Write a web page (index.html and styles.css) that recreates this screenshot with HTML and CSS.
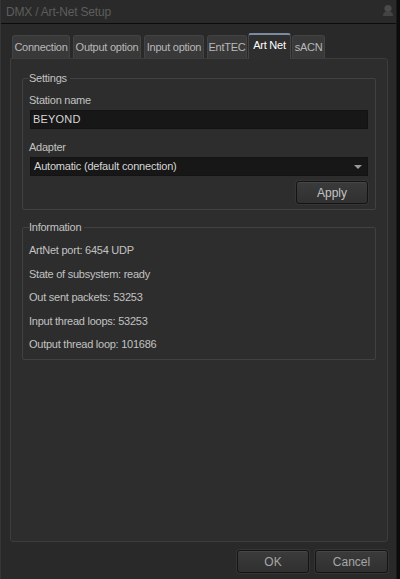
FILE: index.html
```html
<!DOCTYPE html>
<html>
<head>
<meta charset="utf-8">
<title>DMX / Art-Net Setup</title>
<link rel="stylesheet" href="styles.css">
</head>
<body>
<div class="window">
    <div class="titlebar">
        <span class="title">DMX / Art-Net Setup</span>
        <svg class="pin" width="12" height="13" viewBox="0 0 12 13">
            <circle cx="6" cy="4.5" r="3.6" fill="#4a4a4a"/>
            <path d="M1 12 C1 8.5 3 7.5 6 7.5 C9 7.5 11 8.5 11 12 Z" fill="#444"/>
        </svg>
    </div>
    <div class="content">
        <div class="tabs">
            <div class="tab t-conn">Connection</div>
            <div class="tab t-out">Output option</div>
            <div class="tab t-in">Input option</div>
            <div class="tab t-ent">EntTEC</div>
            <div class="tab t-art active">Art Net</div>
            <div class="tab t-sacn">sACN</div>
        </div>
        <div class="pane">
            <fieldset class="group">
                <legend>Settings</legend>
                <div class="label">Station name</div>
                <div class="input">BEYOND</div>
                <div class="label gap">Adapter</div>
                <div class="select">Automatic (default connection)<span class="arrow"></span></div>
                <div class="apply-row"><button class="btn apply">Apply</button></div>
            </fieldset>
            <fieldset class="group info">
                <legend>Information</legend>
                <div class="row">ArtNet port: 6454 UDP</div>
                <div class="row">State of subsystem: ready</div>
                <div class="row">Out sent packets: 53253</div>
                <div class="row">Input thread loops: 53253</div>
                <div class="row">Output thread loop: 101686</div>
            </fieldset>
        </div>
        <div class="actions">
            <button class="btn ok">OK</button>
            <button class="btn cancel">Cancel</button>
        </div>
    </div>
</div>
</body>
</html>
```

FILE: styles.css
```css
body {margin:0; background:#0c0c0c; font-family:"Liberation Sans", Arial, sans-serif;}
.window {
    width:397px; height:579px;
    box-sizing:border-box;
    background:#292929;
    border-left:1px solid #353535;
    border-right:1px solid #1a1a1a;
}
.titlebar {
    height:23px;
    border-bottom:1px solid #0c0c0c;
    background:#2a2a2a;
    display:flex; align-items:center; justify-content:space-between;
    padding:0 2px 0 5px;
}
.title {font-size:12px; color:#5d5d5d; letter-spacing:-0.2px;}
.pin {margin-top:-2px;}

.content {padding:0 8px 0 9px;}

/* tabs */
.tabs {display:flex; align-items:flex-end; gap:3px; padding:9px 0 0 2px;}
.tab {
    height:23px; box-sizing:border-box;
    background:#393939;
    border:1px solid #434343; border-bottom:none;
    border-radius:3px 3px 0 0;
    color:#b8b8b8; font-size:11px; letter-spacing:-0.25px;
    line-height:23px; text-align:center;
}
.t-conn {width:58px;}
.t-out {width:68px;}
.t-in {width:60px;}
.t-ent {width:40px;}
.t-art {width:43px;}
.t-sacn {width:33px;}
.tab.active {
    height:26px;
    margin:0 -2px -1px;
    background:#2e2e2e;
    border-color:#454545;
    border-top:2px solid #7a8ba0;
    color:#fff;
    line-height:21px;
    position:relative; z-index:1;
}

.pane {
    height:484px; box-sizing:border-box;
    background:#2d2d2d;
    border:1px solid #3d3d3d;
    border-radius:0 3px 3px 3px;
    padding:0 11px 0 11px;
}

/* group boxes */
.group {
    margin:12px 0 0; min-width:0;
    border:1px solid #414141; border-radius:2px;
    padding:8px 7px 5px;
}
.group legend {
    padding:0 3px 0 0; margin-left:-1px;
    font-size:11px; line-height:14px; color:#c2c2c2; letter-spacing:-0.25px;
}
.label {font-size:11px; line-height:14px; color:#c2c2c2; letter-spacing:-0.25px; margin-left:-1px;}
.label.gap {margin-top:11px;}
.input, .select {
    margin-top:3px;
    height:19px; box-sizing:border-box;
    background:#171717;
    border:1px solid #131313;
    color:#d6d6d6; font-size:11px; line-height:17px; letter-spacing:-0.2px;
}
.input {padding-left:2px; letter-spacing:0.2px;}
.select {padding-left:3px; display:flex; justify-content:space-between; align-items:center;}
.arrow {
    width:0; height:0; margin-right:5px;
    border-left:4px solid transparent; border-right:4px solid transparent;
    border-top:4px solid #9a9a9a;
}
.apply-row {display:flex; justify-content:flex-end; margin-top:5px;}

.info {margin-top:10px; padding:5px 7px 2px;}
.row {font-size:11px; line-height:23.5px; color:#c2c2c2; letter-spacing:-0.25px; margin-left:-1px;}

/* buttons */
.btn {
    height:23px; box-sizing:border-box;
    background:linear-gradient(#3b3b3b, #303030);
    border:1px solid #141414; border-radius:3px;
    box-shadow:inset 0 1px 0 #474747, 0 0 0 1px #353535;
    color:#c4c4c4; font-family:"Liberation Sans", Arial, sans-serif; font-size:12px;
    padding:0;
}
.apply {width:72px;}
.actions {display:flex; justify-content:flex-end; gap:6px; margin-top:8px;}
.ok {width:72px; color:#a6a6a6;}
.cancel {width:73px; color:#a6a6a6;}
```
